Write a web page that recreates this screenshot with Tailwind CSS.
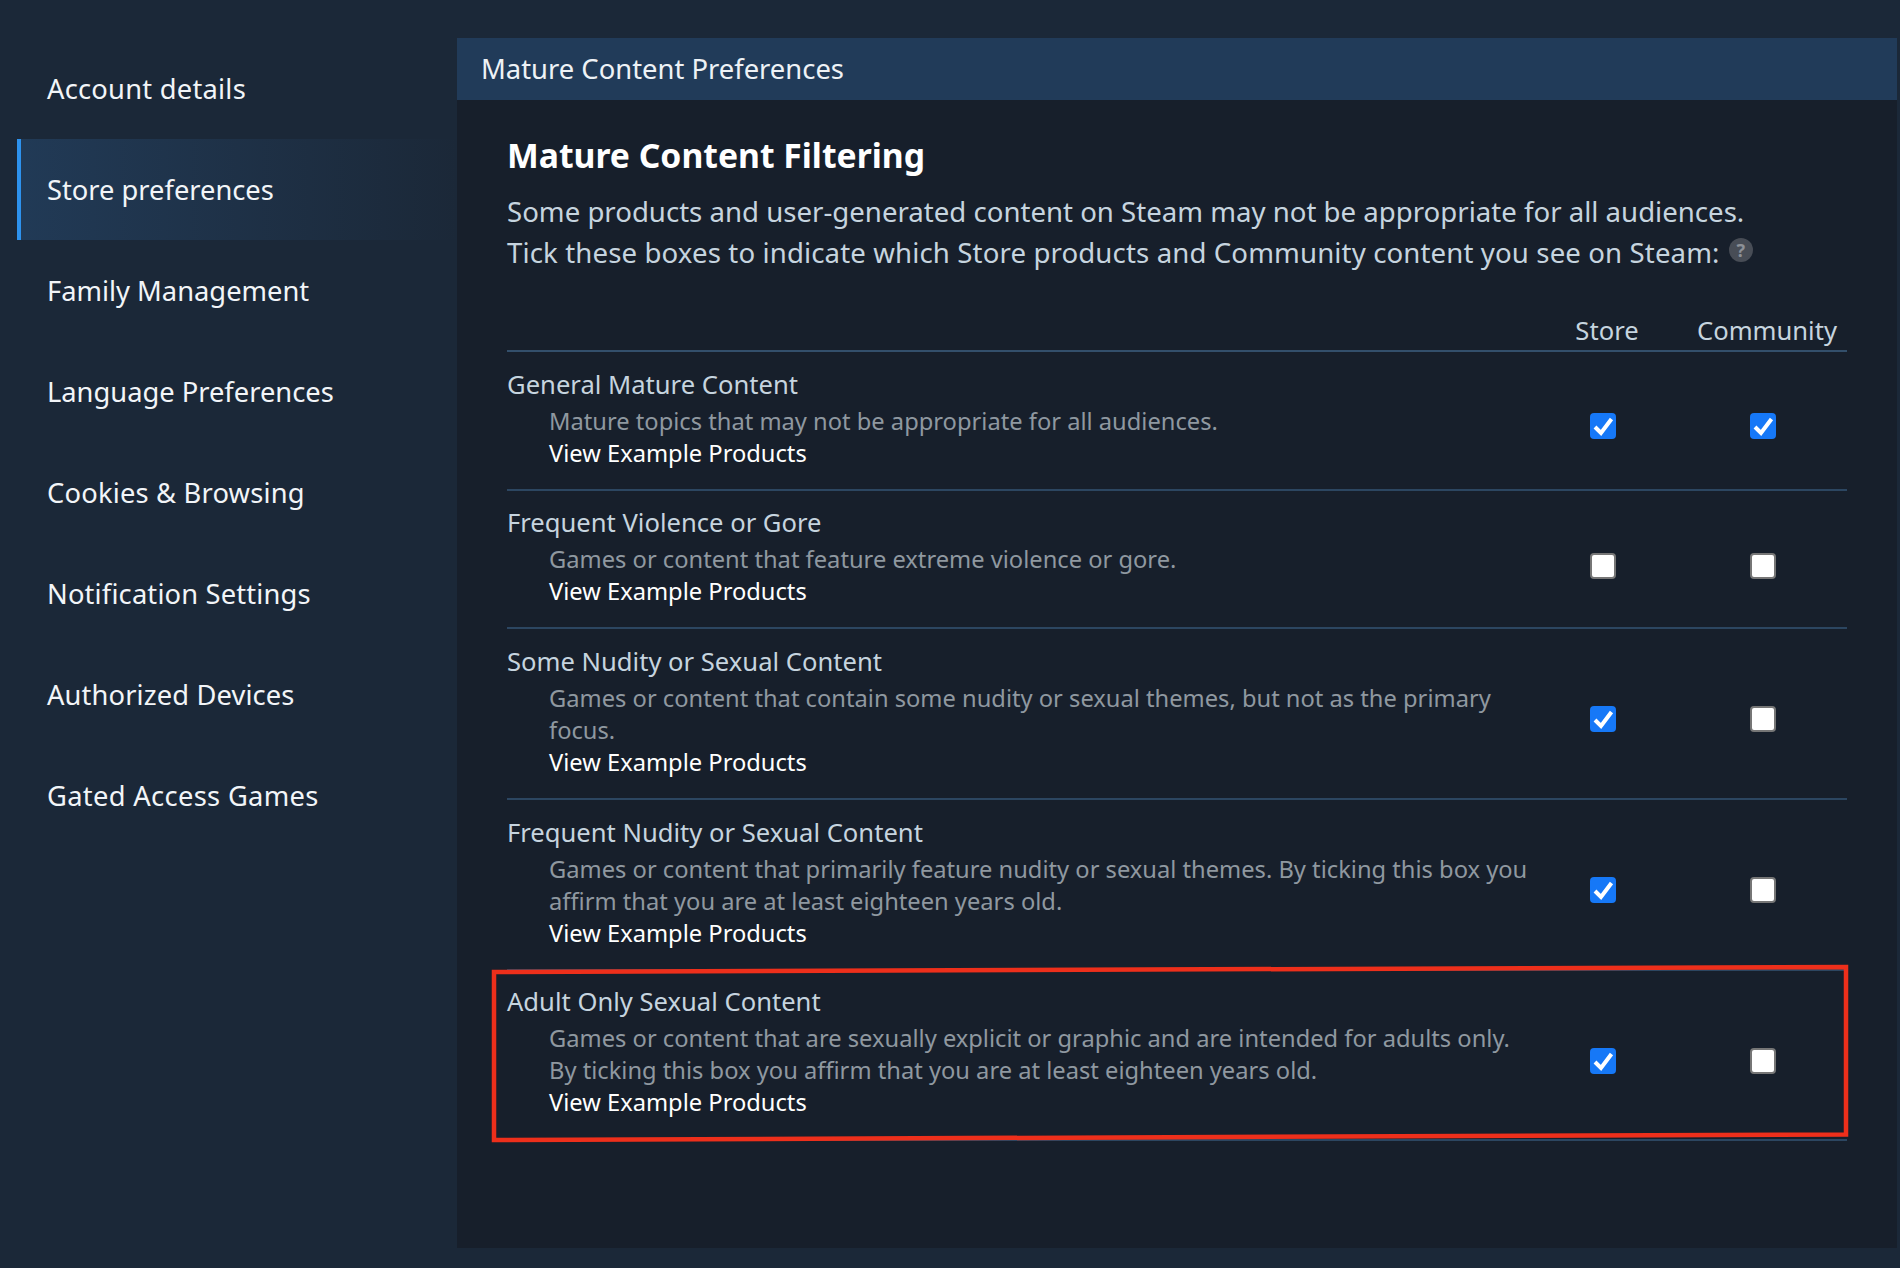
<!DOCTYPE html>
<html lang="en">
  <head>
    <meta charset="UTF-8" />
    <script src="https://cdn.jsdelivr.net/npm/@tailwindcss/browser@4"></script>
    <title>Store preferences</title>
  </head>
  <body class="bg-[#1b2838] font-['Noto_Sans',sans-serif] antialiased">
    <div class="relative flex w-[1900px] h-[1268px] pt-[38px] overflow-hidden">
      <!-- sidebar -->
      <nav class="w-[457px] pl-[17px] text-[27.3px] text-[#f2f5f8]">
        <a class="flex items-center h-[101px] pt-[2px] pl-[30px] tracking-[0.24px]">Account details</a>
        <a class="flex items-center h-[101px] pt-[2px] pl-[26px] border-l-4 border-[#2d92ee] bg-gradient-to-r from-[#213a56] to-[#1b2838]">Store preferences</a>
        <a class="flex items-center h-[101px] pt-[2px] pl-[30px]">Family Management</a>
        <a class="flex items-center h-[101px] pt-[2px] pl-[30px]">Language Preferences</a>
        <a class="flex items-center h-[101px] pt-[2px] pl-[30px] tracking-[0.2px]">Cookies &amp; Browsing</a>
        <a class="flex items-center h-[101px] pt-[2px] pl-[30px] tracking-[0.17px]">Notification Settings</a>
        <a class="flex items-center h-[101px] pt-[2px] pl-[30px] tracking-[0.13px]">Authorized Devices</a>
        <a class="flex items-center h-[101px] pt-[2px] pl-[30px] tracking-[0.33px]">Gated Access Games</a>
      </nav>

      <!-- main panel -->
      <main class="w-[1440px] h-[1210px] bg-[#171f2b]">
        <div class="flex items-center h-[62px] pl-[24px] bg-[#213b59] text-[27.4px] text-[#eef2f6]">Mature Content Preferences</div>
        <div class="px-[50px]">
          <h1 class="mt-[32px] h-[46px] leading-[46px] text-[33.7px] font-bold text-white">Mature Content Filtering</h1>
          <p class="mt-[13px] text-[27.6px] leading-[41px] text-[#c6d4df]">
            Some products and user-generated content on Steam may not be appropriate for all audiences.<br />
            <span class="tracking-[0.12px]">Tick these boxes to indicate which Store products and Community content you see on Steam:</span>
            <span class="inline-flex items-center justify-center align-[6px] ml-[2px] w-[24px] h-[24px] rounded-full bg-[#484d56] text-[18px] leading-none font-bold text-[#8d9198]">?</span>
          </p>

          <div class="flex items-center h-[40px] mt-[39px] text-[25.6px] text-[#c6d4df] border-b-2 border-[#334f6b]">
            <div class="flex-1"></div>
            <div class="w-[160px] text-center">Store</div>
            <div class="w-[160px] text-center">Community</div>
          </div>

          <div class="flex h-[139px] border-b-2 border-[#2c4661]">
            <div class="flex-1 pt-[17px]">
              <div class="text-[25.6px] leading-[32px] text-[#c6d4df]">General Mature Content</div>
              <div class="pl-[42px] mt-[4px] text-[23.7px] leading-[32px] text-[#8f98a0]">Mature topics that may not be appropriate for all audiences.</div>
              <div class="pl-[42px] text-[23.7px] leading-[32px] text-white">View Example Products</div>
            </div>
            <div class="flex items-center justify-center w-[160px] pt-[11px] pr-[8px]">
              <span class="w-[26px] h-[26px] rounded-[4px] bg-[#1678f7]"><svg viewBox="0 0 26 26" class="w-[26px] h-[26px]"><path d="M5 14l6 6L21.5 6" fill="none" stroke="#fff" stroke-width="4" /></svg></span>
            </div>
            <div class="flex items-center justify-center w-[160px] pt-[11px] pr-[8px]">
              <span class="w-[26px] h-[26px] rounded-[4px] bg-[#1678f7]"><svg viewBox="0 0 26 26" class="w-[26px] h-[26px]"><path d="M5 14l6 6L21.5 6" fill="none" stroke="#fff" stroke-width="4" /></svg></span>
            </div>
          </div>

          <div class="flex h-[138px] border-b-2 border-[#2c4661]">
            <div class="flex-1 pt-[16px]">
              <div class="text-[25.6px] leading-[32px] text-[#c6d4df]">Frequent Violence or Gore</div>
              <div class="pl-[42px] mt-[4px] text-[23.7px] leading-[32px] text-[#8f98a0]">Games or content that feature extreme violence or gore.</div>
              <div class="pl-[42px] text-[23.7px] leading-[32px] text-white">View Example Products</div>
            </div>
            <div class="flex items-center justify-center w-[160px] pt-[13px] pr-[8px]">
              <span class="w-[26px] h-[26px] rounded-[4px] bg-white border-2 border-[#767676]"></span>
            </div>
            <div class="flex items-center justify-center w-[160px] pt-[13px] pr-[8px]">
              <span class="w-[26px] h-[26px] rounded-[4px] bg-white border-2 border-[#767676]"></span>
            </div>
          </div>

          <div class="flex h-[171px] border-b-2 border-[#2c4661]">
            <div class="flex-1 pt-[17px]">
              <div class="text-[25.6px] leading-[32px] text-[#c6d4df]">Some Nudity or Sexual Content</div>
              <div class="pl-[42px] mt-[4px] text-[23.7px] leading-[32px] text-[#8f98a0]">Games or content that contain some nudity or sexual themes, but not as the primary focus.</div>
              <div class="pl-[42px] text-[23.7px] leading-[32px] text-white">View Example Products</div>
            </div>
            <div class="flex items-center justify-center w-[160px] pt-[11px] pr-[8px]">
              <span class="w-[26px] h-[26px] rounded-[4px] bg-[#1678f7]"><svg viewBox="0 0 26 26" class="w-[26px] h-[26px]"><path d="M5 14l6 6L21.5 6" fill="none" stroke="#fff" stroke-width="4" /></svg></span>
            </div>
            <div class="flex items-center justify-center w-[160px] pt-[11px] pr-[8px]">
              <span class="w-[26px] h-[26px] rounded-[4px] bg-white border-2 border-[#767676]"></span>
            </div>
          </div>

          <div class="flex h-[171px] border-b-2 border-[#2c4661]">
            <div class="flex-1 pt-[17px]">
              <div class="text-[25.6px] leading-[32px] text-[#c6d4df]">Frequent Nudity or Sexual Content</div>
              <div class="pl-[42px] mt-[4px] text-[23.7px] leading-[32px] text-[#8f98a0] whitespace-nowrap">Games or content that primarily feature nudity or sexual themes. By ticking this box you<br />affirm that you are at least eighteen years old.</div>
              <div class="pl-[42px] text-[23.7px] leading-[32px] text-white">View Example Products</div>
            </div>
            <div class="flex items-center justify-center w-[160px] pt-[11px] pr-[8px]">
              <span class="w-[26px] h-[26px] rounded-[4px] bg-[#1678f7]"><svg viewBox="0 0 26 26" class="w-[26px] h-[26px]"><path d="M5 14l6 6L21.5 6" fill="none" stroke="#fff" stroke-width="4" /></svg></span>
            </div>
            <div class="flex items-center justify-center w-[160px] pt-[11px] pr-[8px]">
              <span class="w-[26px] h-[26px] rounded-[4px] bg-white border-2 border-[#767676]"></span>
            </div>
          </div>

          <div class="flex h-[170px] border-b-2 border-[#2c4661]">
            <div class="flex-1 pt-[15px]">
              <div class="text-[25.6px] leading-[32px] text-[#c6d4df]">Adult Only Sexual Content</div>
              <div class="pl-[42px] mt-[4px] text-[23.7px] leading-[32px] text-[#8f98a0]">Games or content that are sexually explicit or graphic and are intended for adults only.<br />By ticking this box you affirm that you are at least eighteen years old.</div>
              <div class="pl-[42px] text-[23.7px] leading-[32px] text-white">View Example Products</div>
            </div>
            <div class="flex items-center justify-center w-[160px] pt-[12px] pr-[8px]">
              <span class="w-[26px] h-[26px] rounded-[4px] bg-[#1678f7]"><svg viewBox="0 0 26 26" class="w-[26px] h-[26px]"><path d="M5 14l6 6L21.5 6" fill="none" stroke="#fff" stroke-width="4" /></svg></span>
            </div>
            <div class="flex items-center justify-center w-[160px] pt-[12px] pr-[8px]">
              <span class="w-[26px] h-[26px] rounded-[4px] bg-white border-2 border-[#767676]"></span>
            </div>
          </div>
        </div>
      </main>

      <!-- red highlight drawn on top of the screenshot -->
      <svg class="absolute left-0 top-0 pointer-events-none" width="1900" height="1268">
        <polygon points="494,972 1846,967 1846,1134.5 494,1140" fill="none" stroke="#ee2f1b" stroke-width="4.5" />
      </svg>
    </div>
  </body>
</html>
